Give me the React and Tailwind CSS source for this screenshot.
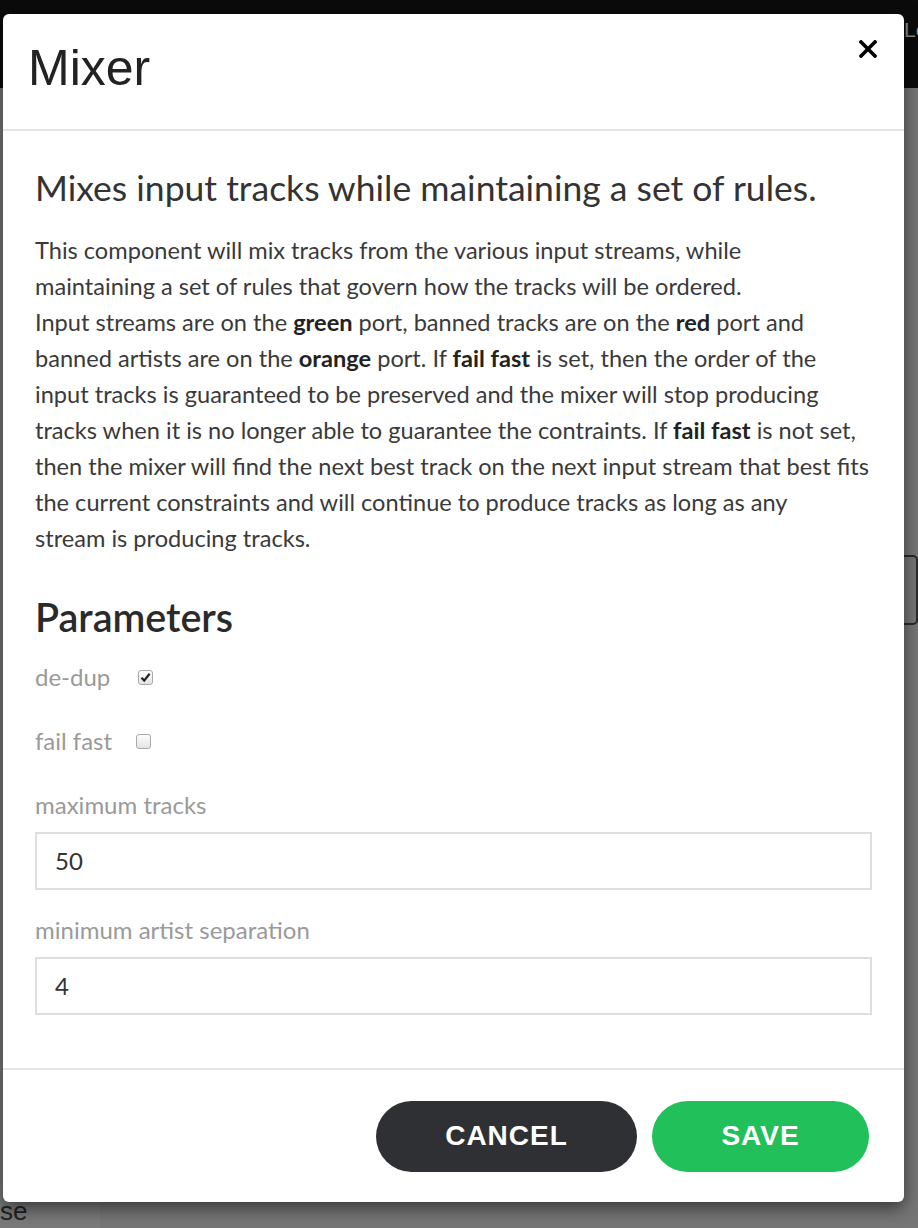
import React from 'react'

const body = { fontFamily: 'Lato, "Open Sans", sans-serif' }
const arial = { fontFamily: '"Liberation Sans", Arial, sans-serif' }

function CloseIcon() {
  return (
    <svg width="18" height="18" viewBox="0 0 18 18" className="-mt-[3px] mr-[10px]">
      <path d="M2 2L16 16M16 2L2 16" stroke="#000" strokeWidth="3.6" strokeLinecap="square" />
    </svg>
  )
}

function Check({ checked }) {
  return (
    <span className="flex h-[15px] w-[15px] items-center justify-center rounded-[3px] border border-[#a9a9a9] bg-gradient-to-b from-[#fdfdfd] to-[#e4e4e4]">
      {checked ? (
        <svg width="11" height="11" viewBox="0 0 11 11">
          <path d="M1.5 5.8L4.2 8.6L9.6 1.8" fill="none" stroke="#222" strokeWidth="2.2" />
        </svg>
      ) : null}
    </span>
  )
}

function Field({ label, value, className }) {
  return (
    <div className={className}>
      <div className="text-[24px] leading-[30px] text-[#9a9a9a]">{label}</div>
      <div className="mt-[12px] flex h-[58px] items-center border-2 border-[#dedede] px-[18px] text-[24px] text-[#333]">
        {value}
      </div>
    </div>
  )
}

export default function App() {
  return (
    <div className="relative h-[1228px] w-[918px] overflow-hidden bg-[#767676]" style={arial}>
      {/* page behind the dialog */}
      <div className="flex h-[88px] items-start bg-[#0b0b0b] pt-[14px] text-[#8f8f8f]">
        <span className="ml-[904px] text-[21px]">Lo</span>
      </div>
      <div className="flex h-[1140px]">
        <div className="flex w-[100px] flex-col justify-end bg-[#7a7a7a] pb-[2px] text-[26px] leading-[30px] text-[#222]">
          <span>se</span>
        </div>
        <div className="flex flex-1 justify-end pt-[467px]">
          <div className="h-[70px] w-[40px] rounded-[5px] border-2 border-[#2a2a2a]" />
        </div>
      </div>

      {/* dialog */}
      <div
        className="absolute left-[3px] top-[14px] flex h-[1188px] w-[901px] flex-col rounded-[6px] bg-white shadow-[0_6px_18px_rgba(0,0,0,0.55)]"
        style={body}
      >
        <div className="flex h-[117px] items-start justify-between border-b-2 border-[#e5e5e5] pl-[25px] pr-[17px] pt-[29px]">
          <h1 className="text-[50px] leading-[50px] text-[#222]" style={arial}>
            Mixer
          </h1>
          <CloseIcon />
        </div>

        <div className="flex-1 px-[32px] pt-[35px]">
          <h2 className="whitespace-nowrap text-[35.5px] leading-[44px] text-[#333]">
            Mixes input tracks while maintaining a set of rules.
          </h2>
          <p className="mt-[22px] whitespace-nowrap text-[23.6px] leading-[36px] text-[#3a3a3a]">
            This component will mix tracks from the various input streams, while
            <br />
            maintaining a set of rules that govern how the tracks will be ordered.
            <br />
            Input streams are on the <b className="text-[#222]">green</b> port, banned tracks are on the{' '}
            <b className="text-[#222]">red</b> port and
            <br />
            banned artists are on the <b className="text-[#222]">orange</b> port. If{' '}
            <b className="text-[#222]">fail fast</b> is set, then the order of the
            <br />
            input tracks is guaranteed to be preserved and the mixer will stop producing
            <br />
            tracks when it is no longer able to guarantee the contraints. If{' '}
            <b className="text-[#222]">fail fast</b> is not set,
            <br />
            then the mixer will find the next best track on the next input stream that best fits
            <br />
            the current constraints and will continue to produce tracks as long as any
            <br />
            stream is producing tracks.
          </p>

          <h3 className="mt-[37px] text-[39.5px] font-semibold leading-[48px] text-[#2a2a2a]">Parameters</h3>

          <div className="mt-[21px] flex h-[30px] items-center gap-[28px] text-[24px] text-[#9a9a9a]">
            <span>de-dup</span>
            <Check checked />
          </div>
          <div className="mt-[34px] flex h-[30px] items-center gap-[24px] text-[24px] text-[#9a9a9a]">
            <span>fail fast</span>
            <Check />
          </div>

          <Field className="mt-[34px]" label="maximum tracks" value="50" />
          <Field className="mt-[25px]" label="minimum artist separation" value="4" />
        </div>

        <div className="flex h-[134px] items-center justify-end gap-[15px] border-t-2 border-[#e5e5e5] pr-[35px]">
          <button
            className="h-[71px] w-[261px] rounded-full bg-[#2f3034] text-[28px] font-bold tracking-[1px] text-white"
            style={arial}
          >
            CANCEL
          </button>
          <button
            className="h-[71px] w-[217px] rounded-full bg-[#22c05a] text-[28px] font-bold tracking-[1px] text-white"
            style={arial}
          >
            SAVE
          </button>
        </div>
      </div>
    </div>
  )
}
